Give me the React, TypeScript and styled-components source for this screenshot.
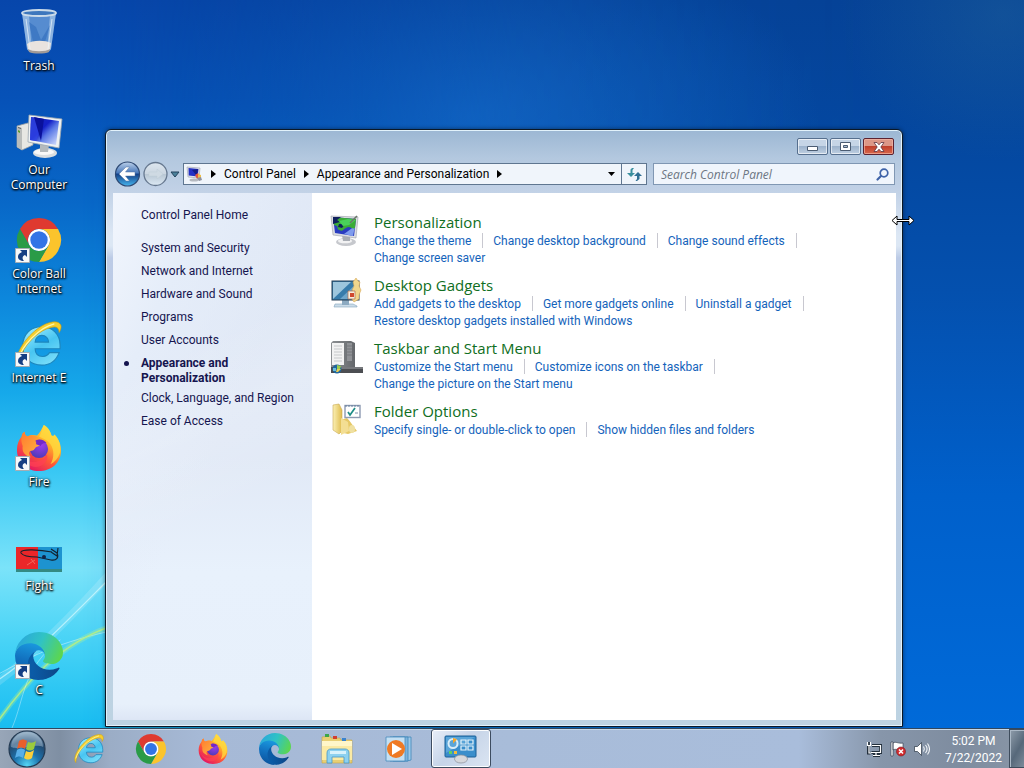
import React from "react";
import styled, { createGlobalStyle, css } from "styled-components";

const uiFont = `Roboto, "Open Sans", sans-serif`;
const displayFont = `"Open Sans", "Noto Sans", sans-serif`;

const GlobalStyle = createGlobalStyle`
  * { box-sizing: border-box; }
  html, body { margin: 0; padding: 0; }
  body, button, input { font-family: ${uiFont}; font-size: 12px; }
  button { margin: 0; padding: 0; border: 0; background: none; color: inherit; cursor: default; }
  a { text-decoration: none; }
  svg { display: block; flex: none; overflow: visible; }
`;

/* ---------- Desktop ---------- */

const Screen = styled.div`
  display: flex;
  flex-direction: column;
  min-height: 100vh;
  overflow: hidden;
`;

const Desktop = styled.main`
  position: relative;
  flex: 1;
  background: linear-gradient(
    to bottom,
    #0746ab 0%,
    #0652b8 14%,
    #0868c8 28%,
    #0d87dc 41%,
    #16a9ea 54%,
    #3ac8f4 65%,
    #7be3f9 78%,
    #48d3f6 88%,
    #18bdf1 100%
  );

  &::before {
    content: "";
    position: absolute;
    inset: 0;
    background:
      radial-gradient(ellipse 16% 20% at 98% 2%, #2a6d9c55, transparent),
      radial-gradient(ellipse 34% 26% at 46% 16%, #1a74d2aa, transparent),
      linear-gradient(to bottom, #054296 0%, #04479f 18%, #0450ae 40%, #0060cb 68%, #006ad9 100%);
    mask-image: linear-gradient(to right, transparent 8%, #000c 50%, #000 85%);
  }
`;

const Beams = styled.svg`
  position: absolute;
  left: 0;
  bottom: 0;
`;

const IconColumn = styled.nav`
  position: relative;
  display: flex;
  flex-direction: column;
  width: 78px;
`;

const Shortcut = styled.button`
  display: flex;
  flex-direction: column;
  align-items: center;
  gap: 2px;
  height: 104px;
  padding-top: 8px;
  color: #fff;
  font-family: ${displayFont};
  line-height: 15px;
  text-shadow: 0 1px 2px #000, 1px 1px 2px #000, 0 0 3px #000a;
`;

const ShortcutPicture = styled.span`
  display: flex;
  align-items: center;
  justify-content: center;
  position: relative;
  width: 48px;
  height: 48px;
`;

const ShortcutArrow = styled.svg`
  position: absolute;
  left: 0;
  bottom: 1px;
`;

/* ---------- Window ---------- */

const Window = styled.section`
  position: absolute;
  inset: 129px 121px 1px 105px;
  display: flex;
  flex-direction: column;
  padding: 0 6px 6px 7px;
  border: 1px solid #0b1826;
  border-radius: 6px 6px 0 0;
  background: linear-gradient(
    to bottom,
    #9cb7d3 0,
    #b3c8df 28px,
    #c1d1e6 60px,
    #dce7f4 105px,
    #dce7f4 116px,
    #bccbe6 128px,
    #bdcfe4 70%,
    #bdd3e2 100%
  );
  box-shadow: inset 0 0 0 1px #e2f2fb, 0 0 4px #0007;
`;

const TitleBar = styled.header`
  display: flex;
  justify-content: flex-end;
  gap: 2px;
  height: 31px;
  padding: 8px 2px 0 0;
`;

const CaptionButton = styled.button<{ $close?: boolean }>`
  display: flex;
  align-items: center;
  justify-content: center;
  width: 31px;
  height: 17px;
  border: 1px solid #566f8e;
  border-radius: 2px;
  box-shadow: inset 0 0 0 1px #ffffff99;
  background: linear-gradient(#c6d5e6 0 48%, #9db3cc 50%, #bfd0e2);
  ${(p) =>
    p.$close &&
    css`
      border-color: #5c2230;
      box-shadow: inset 0 0 0 1px #f3b8a8aa;
      background: linear-gradient(#dc9787 0 46%, #c0402c 50%, #d8674c);
    `}
`;

const NavBar = styled.div`
  display: flex;
  align-items: center;
  gap: 6px;
  height: 26px;
  padding: 0 1px;
`;

const History = styled.div`
  display: flex;
  align-items: center;
  width: 69px;
  margin-right: -6px;
  gap: 2px;
`;

const HistoryButton = styled.button`
  display: flex;
`;

const AddressBar = styled.div`
  display: flex;
  flex: 1;
  height: 22px;
  border: 1px solid #5f7690;
  background: #f0f5fb;
  min-width: 0;
`;

const Crumbs = styled.div`
  display: flex;
  align-items: center;
  flex: 1;
  gap: 8px;
  padding: 0 6px 0 2px;
  min-width: 0;
  white-space: nowrap;
`;

const Crumb = styled.button`
  color: #000;
  line-height: 18px;
`;

const HistoryDrop = styled.button`
  margin-left: auto;
`;

const Refresh = styled.button`
  display: flex;
  align-items: center;
  justify-content: center;
  width: 25px;
  border-left: 1px solid #5f7690;
`;

const SearchBox = styled.label`
  display: flex;
  align-items: center;
  width: 242px;
  height: 22px;
  padding: 0 5px 0 7px;
  border: 1px solid #8097b3;
  background: #f0f5fc;
`;

const SearchInput = styled.input`
  flex: 1;
  min-width: 0;
  padding: 0;
  border: 0;
  outline: 0;
  background: none;
  font-family: ${displayFont};
  font-style: italic;
  &::placeholder {
    color: #6d7683;
    opacity: 1;
  }
`;

const Body = styled.div`
  display: flex;
  flex: 1;
  margin-top: 6px;
  background: #fff;
`;

const Sidebar = styled.nav`
  width: 199px;
  flex: none;
  padding: 15px 0 0 28px;
  background:
    linear-gradient(155deg, transparent 30%, #ffffff22 44%, transparent 60%),
    linear-gradient(115deg, #f2f6fd 0%, #e5edf9 22%, #dfe7f500 50%),
    linear-gradient(to bottom, #e0e8f6 0%, #e1e9f6 50%, #e8f1fc 72%, #e7f0fb 97%, #dde6f5 100%);
`;

const SideList = styled.ul`
  list-style: none;
  margin: 0;
  padding: 0;
`;

const SideItem = styled.li<{ $active?: boolean }>`
  position: relative;
  margin-bottom: ${(p) => (p.$active ? 5 : 8)}px;
  line-height: 15px;
  ${(p) =>
    p.$active &&
    css`
      width: 100px;
      font-weight: 700;
      &::before {
        content: "";
        position: absolute;
        left: -17px;
        top: 5px;
        width: 5px;
        height: 5px;
        border-radius: 50%;
        background: #14144e;
      }
    `}
`;

const SideLink = styled.a`
  color: #15154f;
`;

const HomeLink = styled(SideLink)`
  display: block;
  margin-bottom: 18px;
  line-height: 15px;
`;

const Content = styled.div`
  display: flex;
  flex-direction: column;
  gap: 8px;
  flex: 1;
  min-width: 0;
  padding: 19px 18px 0 18px;
`;

const Category = styled.section`
  display: flex;
  align-items: flex-start;
  gap: 12px;
`;

const CategoryIcon = styled.span`
  width: 32px;
  padding-top: 3px;
`;

const CategoryText = styled.div`
  flex: 1;
  min-width: 0;
`;

const CategoryTitle = styled.h2`
  margin: 0;
  font-family: ${displayFont};
  font-size: 15px;
  font-weight: 400;
  line-height: 21px;
`;

const TitleLink = styled.a`
  color: #0f6e22;
`;

const Tasks = styled.ul`
  display: flex;
  flex-wrap: wrap;
  margin: 0;
  padding: 0;
  list-style: none;
`;

const Task = styled.li`
  margin-right: 10px;
  padding-right: 12px;
  line-height: 17px;
  &:not(:last-child) {
    background: linear-gradient(#c8c8d0, #c8c8d0) right top / 1px 15px no-repeat;
  }
`;

const TaskLink = styled.a`
  color: #1463bb;
`;

const ResizeCursor = styled.svg`
  position: absolute;
  right: -13px;
  top: 85px;
`;

/* ---------- Taskbar ---------- */

const Taskbar = styled.footer`
  position: relative;
  display: flex;
  height: 40px;
  border-top: 1px solid #31475f;
  box-shadow: inset 0 1px 0 #c6d8e8;
  background: linear-gradient(
    to right,
    #98a6b8 0,
    #7f8fa3 60px,
    #9badc6 110px,
    #a6b9d6 200px,
    #a8bcd9 50%,
    #a9bddb 78%,
    #8796aa 86%,
    #7e8c9f 94%,
    #8996a7 100%
  );
`;

const StartButton = styled.button`
  display: flex;
  align-items: center;
  justify-content: center;
  width: 54px;
  margin-right: 5px;
`;

const Pinned = styled.div`
  display: flex;
  gap: 2px;
  flex: 1;
`;

const TaskButton = styled.button<{ $active?: boolean }>`
  display: flex;
  align-items: center;
  justify-content: center;
  width: 60px;
  ${(p) =>
    p.$active &&
    css`
      border: 1px solid #3d4c60;
      border-radius: 3px;
      box-shadow: inset 0 0 0 1px #fffffff0;
      background: linear-gradient(135deg, #e8eef8, #c6d4e8 45%, #dbe5f2);
    `}
`;

const Tray = styled.div`
  display: flex;
  align-items: center;
  gap: 8px;
`;

const Clock = styled.time`
  width: 71px;
  padding-top: 2px;
  color: #fff;
  line-height: 17px;
  text-align: center;
`;

const ShowDesktop = styled.button`
  align-self: stretch;
  width: 15px;
  margin-left: -8px;
  border: 1px solid #3e4c5c;
  border-right: 0;
  box-shadow: inset 1px 1px 0 #aab8c6;
  background: linear-gradient(120deg, #8f9dab, #56687a 55%, #7c8b9a);
`;

/* ---------- Drawings ---------- */

const SharedPaints = () => (
  <svg width="0" height="0" aria-hidden="true" style={{ position: "absolute" }}>
    <defs>
      <linearGradient id="edgeDark" x1="0.2" y1="0.6" x2="1" y2="0.6">
        <stop offset="0" stopColor="#0b5ba6" />
        <stop offset="1" stopColor="#0d4687" />
      </linearGradient>
      <linearGradient id="edgeMid" x1="0.6" y1="0" x2="0.4" y2="1">
        <stop offset="0" stopColor="#1b9de2" />
        <stop offset="0.5" stopColor="#1272c0" />
        <stop offset="1" stopColor="#0a529c" />
      </linearGradient>
      <linearGradient id="edgeTop" x1="0" y1="0.3" x2="1" y2="0.6">
        <stop offset="0" stopColor="#2aa6dd" />
        <stop offset="0.5" stopColor="#30c3c4" />
        <stop offset="1" stopColor="#5cd64f" />
      </linearGradient>
      <linearGradient id="foxBody" x1="0.85" y1="0.05" x2="0.25" y2="0.95">
        <stop offset="0" stopColor="#fff04a" />
        <stop offset="0.35" stopColor="#ffb02a" />
        <stop offset="0.62" stopColor="#ff5b36" />
        <stop offset="1" stopColor="#e31763" />
      </linearGradient>
      <radialGradient id="foxGlobe" cx="0.6" cy="0.25" r="0.8">
        <stop offset="0" stopColor="#a13cf0" />
        <stop offset="1" stopColor="#4a3bb5" />
      </radialGradient>
      <linearGradient id="foxHead" x1="0" y1="0" x2="1" y2="1">
        <stop offset="0" stopColor="#ff7a2f" />
        <stop offset="1" stopColor="#ffb840" />
      </linearGradient>
      <linearGradient id="ieBlue" x1="0.2" y1="0" x2="0.8" y2="1">
        <stop offset="0" stopColor="#9becff" />
        <stop offset="0.5" stopColor="#48c5f1" />
        <stop offset="1" stopColor="#7fe0fa" />
      </linearGradient>
      <linearGradient id="screenBlue" x1="0" y1="0" x2="1" y2="1">
        <stop offset="0" stopColor="#1426b0" />
        <stop offset="0.42" stopColor="#1420c8" />
        <stop offset="0.6" stopColor="#5a78e6" />
        <stop offset="1" stopColor="#dfe8ff" />
      </linearGradient>
      <linearGradient id="folderYellow" x1="0" y1="0" x2="1" y2="0">
        <stop offset="0" stopColor="#fbf0b4" />
        <stop offset="1" stopColor="#dfbc4e" />
      </linearGradient>
      <linearGradient id="menuGrey" x1="0" y1="0" x2="1" y2="0">
        <stop offset="0" stopColor="#8d9093" />
        <stop offset="1" stopColor="#64676b" />
      </linearGradient>
    </defs>
  </svg>
);

type IconProps = { size: number };

const Chrome = ({ size }: IconProps) => (
  <svg width={size} height={size} viewBox="0 0 48 48" aria-hidden="true">
    <circle cx="24" cy="24" r="12" fill="#fff" />
    <path fill="#df3a30" d="M24,12H44.7812a23.9939,23.9939,0,0,0-41.5639.0029L13.6079,30l.0093-.0024A11.9852,11.9852,0,0,1,24,12Z" />
    <path fill="#fbc42c" d="M34.3913,30.0029,24.0007,48A23.994,23.994,0,0,0,44.78,12.0031H23.9989l-.0025.0093A11.985,11.985,0,0,1,34.3913,30.0029Z" />
    <path fill="#2a9b47" d="M13.6086,30.0031,3.218,12.006A23.994,23.994,0,0,0,24.0025,48L34.3931,30.0029l-.0067-.0068a11.9852,11.9852,0,0,1-20.7778.007Z" />
    <circle cx="24" cy="24" r="9.5" fill="#3374e6" />
  </svg>
);

const Edge = ({ size }: IconProps) => (
  <svg width={size} height={size} viewBox="0 0 256 256" aria-hidden="true">
    <path fill="url(#edgeDark)" d="M231.05 190.54c-3.38 1.76-6.86 3.33-10.43 4.7a101.15 101.15 0 0 1-35.6 6.46c-46.92 0-87.79-32.27-87.79-73.69.1-11.32 6.33-21.7 16.25-27.16-42.45 1.79-53.36 46.02-53.36 71.94 0 73.27 67.53 80.7 82.08 80.7 7.84 0 19.68-2.28 26.78-4.53l1.3-.43a128.35 128.35 0 0 0 66.6-52.8 4 4 0 0 0-5.83-5.19z" />
    <path fill="url(#edgeMid)" d="M105.73 241.42a79.2 79.2 0 0 1-22.74-21.34 80.72 80.72 0 0 1 29.49-119.23c3.12-1.47 8.45-4.13 15.54-4A32.35 32.35 0 0 1 153.7 109.83a31.88 31.88 0 0 1 6.35 18.65c0-.22 24.47-79.6-80-79.6-43.9 0-80.01 41.66-80.01 78.21a130.15 130.15 0 0 0 12.08 56.03 128.08 128.08 0 0 0 156.3 67 75.5 75.5 0 0 1-62.68-8.7z" />
    <path fill="url(#edgeTop)" d="M152.28 148.86c-.8 1.05-3.3 2.5-3.3 5.66 0 2.61 1.7 5.12 4.72 7.23 14.39 10 41.5 8.69 41.57 8.69 10.65 0 21.1-2.9 30.28-8.32a61.34 61.34 0 0 0 30.4-52.88c.26-22.41-8-37.3-11.34-43.9C223.47 23.9 177.78 0 128.02 0A128 128 0 0 0 0 126.2c.49-36.54 36.8-66.05 80.02-66.05 3.5 0 23.46.34 42.01 10.07 16.34 8.58 24.9 18.94 30.85 29.21 6.18 10.67 7.28 24.15 7.28 29.52 0 5.37-2.74 13.33-7.88 19.9z" />
  </svg>
);

const Firefox = ({ size }: IconProps) => (
  <svg width={size} height={size} viewBox="0 0 48 48" aria-hidden="true">
    <path fill="url(#foxBody)" d="M29 0c5 3 7 7 8 11 2 1 3 0 3-1 5 5 7 11 7 17 0 12-10 21-23 21S1 39 1 26c0-6 2-11 5-14 0-2 1-4 3-5 0 3 1 4 3 5 3-2 7-2 10-1 3-3 5-7 7-11z" />
    <path fill="#ffd83f" fillOpacity=".8" d="M29 0c5 3 7 7 8 11 2 1 3 0 3-1 5 5 7 11 6 19-2 6-6 10-10 12 4-7 4-15 0-21-3-4-8-6-12-8 2-3 4-7 5-12z" />
    <circle cx="24" cy="25" r="9.5" fill="url(#foxGlobe)" />
    <path fill="url(#foxHead)" d="M6 12c0-2 1-4 3-5 0 3 1 4 3 5 4-2 8-1 11 1-2 1-3 3-3 4 2 1 5 0 7 1 0 3-3 4-6 5-2 2-2 4-6 4-2 1-2 4 1 7-7-2-10-6-9-12-1-3-2-6-1-10z" />
    <path fill="#ff4054" fillOpacity=".7" d="M4 30c4 7 11 10 18 8 6-1 9-5 10-8 2 5-1 11-7 13-8 3-17-3-21-13z" />
    <path fill="#7328c9" d="M21 16c4-2 9 0 11 3-3-1-6 1-6 3l-5-2z" />
  </svg>
);

const Explorer = ({ size }: IconProps) => (
  <svg width={size} height={size} viewBox="0 0 48 48" aria-hidden="true">
    <path fill="url(#ieBlue)" stroke="#1d86bd" strokeWidth="1.2" fillRule="evenodd" d="M27 6c11 0 19 8 19 19v4H20c0 5 3 8 8 8 3 0 5-1 7-4h10c-3 8-9 13-18 13C15 46 7 38 7 26S15 6 27 6zm-7 16h14c0-4-3-7-7-7s-7 3-7 7z" />
    <path fill="#f6cf2d" stroke="#c89a12" strokeWidth=".7" d="M3 46C-3 39 6 22 19 11 29 2 42-2 46 3c2 2 1 6-1 9 0-5-3-7-9-5C26 9 12 21 6 34c-2 5-3 9-3 12z" />
    <path fill="none" stroke="#fff6a8" strokeWidth="1.2" d="M3 39C6 27 23 7 40 3" />
  </svg>
);

const Trash = () => (
  <svg width="40" height="48" viewBox="0 0 40 48" aria-hidden="true">
    <path fill="#78a9de" fillOpacity=".7" d="M3 5l5 36c1 4 23 4 24 0l5-36z" />
    <path fill="#bcd6ef" fillOpacity=".55" d="M3 5l5 36c1 2 3 3 5 3L10 7zM37 5l-5 36c-1 2-2 2-4 3l3-37z" />
    <path fill="#2766b8" fillOpacity=".5" d="M10 14l7 5 5 13 9-15-5 17H14z" />
    <path fill="#e9e3df" d="M8 36c5-4 18-4 24-1l-1 6c-3 4-19 4-22 0z" />
    <path fill="#a19a97" d="M9 41c4 3 18 3 22 0l-1 3c-4 2-16 2-20 0z" />
    <ellipse cx="20" cy="5" rx="17" ry="3" fill="#3d77bd" stroke="#cbdbe9" strokeWidth="1.8" />
    <path fill="none" stroke="#eef6fc" strokeOpacity=".7" d="M7 11l4 30M33 11l-4 30" />
  </svg>
);

const Computer = () => (
  <svg width="48" height="48" viewBox="0 0 48 48" aria-hidden="true">
    <path fill="#e7e7e3" stroke="#9aa0a3" strokeWidth=".8" d="M2 14l11-3 5 3v19L7 38l-5-3z" />
    <path fill="#b9bcbb" d="M2 14l5 2v22l-5-3z" />
    <path fill="#5b9b2f" d="M3 18l2 1v2l-2-1z" />
    <path fill="#5d6062" d="M3 15l3 1v1l-3-1z" />
    <ellipse cx="30" cy="41" rx="12" ry="5" fill="#d9dde0" />
    <ellipse cx="29" cy="40" rx="10" ry="3" fill="#f8f8f8" />
    <path fill="#b4babd" d="M25 31l9 2-1 7h-8z" />
    <path fill="#eef1f2" stroke="#9ba6ae" strokeWidth=".8" d="M14 3l33 4-3 29-31-6z" />
    <path fill="url(#screenBlue)" d="M16 5l28 4-3 24-26-5z" />
    <path fill="#3349e8" fillOpacity=".7" d="M16 5l13 2-8 22-6-1z" />
    <path fill="#0a119b" d="M19 5l10 2-3 22z" />
  </svg>
);

const Fight = () => (
  <svg width="46" height="48" viewBox="0 0 46 48" aria-hidden="true">
    <rect y="19" width="22" height="25" fill="#ea2629" />
    <rect x="22" y="19" width="24" height="25" fill="#1d93d0" />
    <path fill="#348a83" d="M0 41h46v3H0z" />
    <path fill="none" stroke="#13222f" strokeWidth="1.1" d="M21 29C14 29 7 28 5 25c-2-5 21-3 31-1M21 29l14 3c6 1 8-3 6-7l-6-4M35 24l6 4 1-8" />
    <circle cx="28" cy="29" r="2" fill="#112447" />
    <path stroke="#f0685c" d="M11 37l8-5M15 31l4 5" />
  </svg>
);

const Arrow = () => (
  <ShortcutArrow width="15" height="15" viewBox="0 0 15 15" aria-hidden="true">
    <path fill="#f7f9fa" stroke="#a4adb4" d="M.5.5h14v14H.5z" />
    <path fill="#163f83" d="M5 2h7v7L10 7c-3 1-3 4-1 6-4 0-6-2-6-4 0-3 2-4 4-5z" />
  </ShortcutArrow>
);

const WallpaperBeams = () => (
  <Beams width="160" height="260" viewBox="0 0 160 260" aria-hidden="true">
    <g fill="none" strokeLinecap="round">
      <path stroke="#fff" strokeOpacity=".16" strokeWidth="8" d="M-5 216C30 190 75 145 115 100" />
      <path stroke="#e8ffff" strokeOpacity=".6" strokeWidth="1.3" d="M-5 214C30 192 70 150 112 108" />
      <path stroke="#fff" strokeOpacity=".4" d="M-5 208C35 186 60 174 115 162" />
      <path stroke="#bdf488" strokeOpacity=".3" strokeWidth="5" d="M-4 256C25 215 60 175 112 158" />
      <path stroke="#b9f07f" strokeOpacity=".85" strokeWidth="1.6" d="M-4 256C25 215 60 175 112 158" />
      <path stroke="#fff" strokeOpacity=".35" d="M12 260C25 230 22 200 60 172" />
    </g>
  </Beams>
);

const StartOrb = () => (
  <svg width="38" height="38" viewBox="0 0 38 38" aria-hidden="true">
    <defs>
      <radialGradient id="orb" cx="0.5" cy="0.95" r="0.9">
        <stop offset="0" stopColor="#55d6f5" />
        <stop offset="0.4" stopColor="#1c73ae" />
        <stop offset="0.75" stopColor="#234a70" />
        <stop offset="1" stopColor="#7f9bb4" />
      </radialGradient>
    </defs>
    <circle cx="19" cy="19" r="18" fill="url(#orb)" stroke="#243a52" strokeWidth="1.2" />
    <path fill="#c8dcea" fillOpacity=".4" d="M3 17a16 15 0 0 1 32 0c-9-4-22 4-32 0z" />
    <path fill="#e9602b" d="M11 11c3-2 5-2 8 0l-2 8c-3-2-5-2-8 0z" />
    <path fill="#9bcb3c" d="M20 12c3 1 5 1 8-1l-2 8c-3 2-5 2-8 0z" />
    <path fill="#58aee8" d="M9 20c3-2 5-2 8 0l-2 8c-3-2-5-2-8 0z" />
    <path fill="#fbcf3b" d="M18 21c3 2 5 1 8-1l-2 8c-3 2-5 2-8 0z" />
  </svg>
);

const Folders = () => (
  <svg width="34" height="32" viewBox="0 0 34 32" aria-hidden="true">
    <path fill="#e8cf74" stroke="#c2a548" strokeWidth=".6" d="M2 4l8-1 1 2h9l1 2h11v23H2z" />
    <rect x="5" y="1" width="4" height="3" fill="#3da648" />
    <rect x="13" y="3" width="4" height="3" fill="#d23f30" />
    <rect x="22" y="5" width="4" height="3" fill="#3a83cf" />
    <path fill="#fbeaa4" d="M2 8h30v19H2z" />
    <path fill="#fff6c9" d="M2 8h30v5H2z" />
    <path fill="#8cd1f0" stroke="#4697c6" strokeWidth=".8" d="M7 30V20c0-3 2-4 4-4h14c2 0 4 1 4 4v10h-5v-6H12v6z" />
    <path fill="#d8f2fc" d="M10 18h16v3H10z" />
  </svg>
);

const MediaPlayer = () => (
  <svg width="28" height="26" viewBox="0 0 28 26" aria-hidden="true">
    <path fill="#9fc9e8" stroke="#3f88ba" strokeWidth=".8" d="M8 1h18v23l-4 1H8z" />
    <path fill="#7db4dc" stroke="#3f88ba" strokeWidth=".8" d="M5 1h18v24H5z" />
    <path fill="#c4e0f3" stroke="#468cbd" strokeWidth=".8" d="M1 1h19v24H1z" />
    <circle cx="11" cy="13" r="9" fill="#ef7a24" />
    <path fill="#fff" d="M7 7l10 6-10 6z" />
  </svg>
);

const ControlPanel = () => (
  <svg width="34" height="30" viewBox="0 0 34 30" aria-hidden="true">
    <rect x="1" y="2" width="31" height="21" rx="1" fill="#3a8ecb" stroke="#1d6097" />
    <path fill="#79bce6" fillOpacity=".5" d="M2 3h29L2 19z" />
    <circle cx="9" cy="9.5" r="4.5" fill="none" stroke="#d8edf8" strokeWidth="2" />
    <path fill="#f3a72b" d="M9 4v5.500l4-4A6 6 0 0 0 9 4z" />
    <path fill="#5fd163" d="M5 17h3v3H5z" />
    <path fill="#f1bd3b" d="M10 17h3v3h-3z" />
    <path fill="none" stroke="#e5f3fb" strokeWidth="1.200" d="M17 6h5v4h-5zM24 6h5v4h-5zM17 12h5v4h-5zM24 12h5v4h-5z" />
    <ellipse cx="17" cy="25" rx="6.5" ry="4" fill="#d6d8dc" stroke="#898e98" strokeWidth=".7" />
  </svg>
);

const Network = () => (
  <svg width="16" height="16" viewBox="0 0 16 16" fill="none" aria-hidden="true">
    <path stroke="#222f3c" strokeWidth="3" d="M6 4.500h8.500v7H5.500M10 12v2M7 14.500h7M2.500 1v5M2.500 6v6h2M1 3.500h3" />
    <path stroke="#fff" strokeWidth="1.200" d="M6 4.500h8.500v7H5M10 12v2M7 14.500h7M1.500 1v3.500h3V1M3 4.500V12h2" />
  </svg>
);

const ActionCenter = () => (
  <svg width="16" height="16" viewBox="0 0 16 16" aria-hidden="true">
    <path fill="#fff" stroke="#25313f" strokeWidth=".6" d="M1 1h2v14H1zM3 2c3-2 5 1 10 0v7c-4 1-7-2-10 0z" />
    <circle cx="11" cy="10.5" r="4.5" fill="#d32b2d" stroke="#781820" strokeWidth=".6" />
    <path stroke="#fff" strokeWidth="1.500" d="M9 8.500l4 4m0-4l-4 4" />
  </svg>
);

const Volume = () => (
  <svg width="16" height="16" viewBox="0 0 16 16" aria-hidden="true">
    <path fill="#fff" stroke="#263442" strokeWidth=".7" d="M.5 5.500h3l4-4v13l-4-4h-3z" />
    <path fill="none" stroke="#f2f5f8" strokeWidth="1.100" d="M9.500 5.500c1 1.500 1 3.500 0 5M11.500 4c2 2.500 2 5.500 0 8M13.500 2.500c2.600 3.500 2.600 7.500 0 11" />
  </svg>
);

const BackGlyph = () => (
  <svg width="27" height="26" viewBox="0 0 27 26" aria-hidden="true">
    <defs>
      <linearGradient id="back" x1="0" y1="0" x2="0" y2="1">
        <stop offset="0" stopColor="#bacfe9" />
        <stop offset="0.46" stopColor="#4777ba" />
        <stop offset="0.5" stopColor="#143f86" />
        <stop offset="1" stopColor="#45b4ee" />
      </linearGradient>
    </defs>
    <circle cx="13.5" cy="13" r="12" fill="url(#back)" stroke="#2f4a74" strokeWidth="1.2" />
    <path fill="#fff" stroke="#5676a3" strokeWidth=".5" d="M5 13l7-7h3.500L11.500 11H21v4h-9.500l4 5H12z" />
  </svg>
);

const ForwardGlyph = () => (
  <svg width="25" height="26" viewBox="0 0 25 26" aria-hidden="true">
    <defs>
      <linearGradient id="forward" x1="0" y1="0" x2="0" y2="1">
        <stop offset="0" stopColor="#dde6ef" />
        <stop offset="0.48" stopColor="#cbd6e1" />
        <stop offset="0.52" stopColor="#b9c7d4" />
        <stop offset="1" stopColor="#dce9f4" />
      </linearGradient>
    </defs>
    <circle cx="12.5" cy="13" r="11.5" fill="url(#forward)" stroke="#66788f" strokeWidth="1.3" />
    <path fill="#cfdae3" stroke="#bfccd7" strokeWidth=".5" d="M20 13l-6-5v3H6v4h8v3z" />
  </svg>
);

const Chevron = () => (
  <svg width="5" height="8" viewBox="0 0 5 8" aria-hidden="true">
    <path d="M0 0l5 4-5 4z" />
  </svg>
);

const AddressIcon = () => (
  <svg width="17" height="16" viewBox="0 0 17 16" aria-hidden="true">
    <path fill="#e4e6ea" stroke="#9a9fac" strokeWidth=".6" d="M1 1l13 1-1 10-11-1z" />
    <path fill="#2330c4" d="M2.500 2l10 1-.8 7.500-9-1z" />
    <path fill="#141c86" d="M6 4l6-1-1 7z" />
    <ellipse cx="8" cy="14" rx="4.5" ry="1.5" fill="#b5b9bf" />
    <path fill="#e05940" d="M9 9l3-2 2 3-3 3z" />
    <path fill="#efbf45" d="M12 8l3 1v4l-3-1z" />
    <path fill="#8d92a0" d="M11 12l4-1 1 3-3 1z" />
  </svg>
);

const PersonalizationIcon = () => (
  <svg width="32" height="32" viewBox="0 0 32 32" aria-hidden="true">
    <ellipse cx="16" cy="27" rx="10" ry="4" fill="#c6c8cd" />
    <ellipse cx="15" cy="26" rx="7" ry="2.3" fill="#f2f2f3" />
    <path fill="#a9adb4" d="M12 20h8v6h-7z" />
    <path fill="#dcdee2" stroke="#9da0a9" strokeWidth=".6" d="M1 1l27 1-2 21-23-3z" />
    <path fill="#2a3cc0" d="M3 2l23 2-2 17-19-3z" />
    <path fill="#7f9cee" d="M25 11l-11 8 9 2z" />
    <path fill="#3cab37" d="M3 2l23 2-1 9c-3 2-5-3-9 0-3 1-2 4-7 2-3-1 1-4-5-5z" />
    <path fill="#10205d" d="M3 2h8l-4 3 3 2-7 2zM9 9h6l-3 4-4-1z" />
    <path fill="#49d05a" d="M9 6l9-2 8 1-7 5-6 1z" />
    <path stroke="#6a7669" strokeWidth="1.600" d="M20 8l7-7" />
  </svg>
);

const GadgetsIcon = () => (
  <svg width="32" height="32" viewBox="0 0 32 32" aria-hidden="true">
    <path fill="#cbdce9" stroke="#85a4bd" strokeWidth=".6" d="M5 26h18l4 2v1H4z" />
    <path fill="#8caac1" d="M12 22h7v5h-7z" />
    <rect x="2" y="3" width="27" height="19" fill="#377cab" stroke="#243d53" />
    <path fill="#9dc6dd" d="M3 4h18L3 21z" />
    <path fill="#6ea6cb" d="M28 4v17H10z" />
    <path fill="#f0d68d" stroke="#d39d45" strokeWidth=".5" d="M23 4l3-4 2 3 2 1-1 4 2 4-2 5v4l-5 3-3-4 3-5-2-3 2-4z" />
    <path fill="#f7f0df" stroke="#ae6a4e" strokeWidth=".7" d="M18 13h7v8h-7z" />
    <path fill="#d1492e" d="M20 15h4v4h-4z" />
  </svg>
);

const TaskbarIcon = () => (
  <svg width="34" height="32" viewBox="0 0 34 32" aria-hidden="true">
    <path fill="url(#menuGrey)" d="M3 0h18l4 2v24H1V2z" />
    <path fill="#f2f2f2" d="M2 2h12v22H2z" />
    <path stroke="#c6c8ca" d="M4 5h8M4 8h8M4 11h8M4 14h8M4 17h8M4 20h8" />
    <path fill="#909296" d="M17 2h5v18h-5z" />
    <path stroke="#74767a" d="M17 5h5M17 8h5M17 11h5M17 14h5" />
    <path fill="#4c4e52" d="M1 26h32v6H1z" />
    <path fill="#77797d" d="M11 26h22v2H11z" />
    <circle cx="7" cy="28" r="4.5" fill="#21669c" />
    <path fill="#9ccd4d" d="M7 24l4 1-1 3H7z" />
    <path fill="#e8cd53" d="M7 28h4l-3 3H6z" />
    <path fill="#67bedd" d="M3 27h3v3H3z" />
  </svg>
);

const FolderIcon = () => (
  <svg width="32" height="32" viewBox="0 0 32 32" aria-hidden="true">
    <path fill="#e6c866" d="M10 16l7-2c3 3 6 8 10 13l-9 3-9-2z" />
    <path fill="url(#folderYellow)" stroke="#c9aa50" strokeWidth=".6" d="M3 1l6-1 3 6v21l-3 3-6-4z" />
    <path fill="#f3de93" d="M11 14l7 4 1 9-8 4z" />
    <ellipse cx="22" cy="25" rx="3" ry="4" fill="#efe0a1" />
    <rect x="15" y="1.5" width="15" height="12" fill="#fff" stroke="#8e9bb3" strokeWidth="1.4" />
    <path stroke="#68829e" strokeWidth="1.200" strokeDasharray="2 1" d="M15 2h15" />
    <path fill="none" stroke="#1d8d86" strokeWidth="1.700" d="M18 8l2 3 5-7" />
    <path stroke="#7c91ad" d="M25 9h3" />
  </svg>
);

/* ---------- Data ---------- */

const shortcuts = [
  { label: "Trash", picture: <Trash /> },
  { label: "Our Computer", picture: <Computer /> },
  { label: "Color Ball Internet", picture: <Chrome size={44} />, linked: true },
  { label: "Internet E", picture: <Explorer size={46} />, linked: true },
  { label: "Fire", picture: <Firefox size={46} />, linked: true },
  { label: "Fight", picture: <Fight /> },
  { label: "C", picture: <Edge size={48} />, linked: true },
];

const sections = [
  "System and Security",
  "Network and Internet",
  "Hardware and Sound",
  "Programs",
  "User Accounts",
  "Appearance and Personalization",
  "Clock, Language, and Region",
  "Ease of Access",
];
const currentSection = "Appearance and Personalization";

const categories = [
  {
    title: "Personalization",
    icon: <PersonalizationIcon />,
    tasks: ["Change the theme", "Change desktop background", "Change sound effects", "Change screen saver"],
  },
  {
    title: "Desktop Gadgets",
    icon: <GadgetsIcon />,
    tasks: [
      "Add gadgets to the desktop",
      "Get more gadgets online",
      "Uninstall a gadget",
      "Restore desktop gadgets installed with Windows",
    ],
  },
  {
    title: "Taskbar and Start Menu",
    icon: <TaskbarIcon />,
    tasks: ["Customize the Start menu", "Customize icons on the taskbar", "Change the picture on the Start menu"],
  },
  {
    title: "Folder Options",
    icon: <FolderIcon />,
    tasks: ["Specify single- or double-click to open", "Show hidden files and folders"],
  },
];

const pinned = [
  { label: "Internet Explorer", picture: <Explorer size={30} /> },
  { label: "Chrome", picture: <Chrome size={30} /> },
  { label: "Firefox", picture: <Firefox size={30} /> },
  { label: "Edge", picture: <Edge size={32} /> },
  { label: "File Explorer", picture: <Folders /> },
  { label: "Media Player", picture: <MediaPlayer /> },
  { label: "Control Panel", picture: <ControlPanel />, active: true },
];

/* ---------- Page ---------- */

const ControlPanelWindow = () => (
  <Window aria-label="Control Panel">
    <TitleBar>
      <CaptionButton aria-label="Minimize">
        <svg width="11" height="9" viewBox="0 0 11 9">
          <path fill="#fff" stroke="#4b5c72" d="M.5 4.500h10v4H.5z" />
        </svg>
      </CaptionButton>
      <CaptionButton aria-label="Maximize">
        <svg width="11" height="9" viewBox="0 0 11 9">
          <path fill="#fff" stroke="#4b5c72" d="M.5.5h10v8H.5z" />
          <path fill="#a9bbd0" stroke="#4b5c72" d="M3.500 3.500h4v2h-4z" />
        </svg>
      </CaptionButton>
      <CaptionButton $close aria-label="Close">
        <svg width="12" height="10" viewBox="0 0 12 10">
          <path fill="#fff" stroke="#5d3440" strokeWidth=".8" d="M1 .5h3l2 2.300L8 .5h3L7.800 5 11 9.500H8L6 7.200 4 9.500H1L4.200 5z" />
        </svg>
      </CaptionButton>
    </TitleBar>
    <NavBar>
      <History>
        <HistoryButton aria-label="Back"><BackGlyph /></HistoryButton>
        <HistoryButton aria-label="Forward"><ForwardGlyph /></HistoryButton>
        <HistoryButton aria-label="Recent pages">
          <svg width="10" height="7" viewBox="0 0 10 7">
            <path fill="#4b819b" stroke="#24435c" d="M1 1h8L5 6z" />
          </svg>
        </HistoryButton>
      </History>
      <AddressBar>
        <Crumbs>
          <AddressIcon />
          <Chevron />
          <Crumb>Control Panel</Crumb>
          <Chevron />
          <Crumb>Appearance and Personalization</Crumb>
          <Chevron />
          <HistoryDrop aria-label="Previous locations">
            <svg width="7" height="4" viewBox="0 0 7 4"><path d="M0 0h7L3.500 4z" /></svg>
          </HistoryDrop>
        </Crumbs>
        <Refresh aria-label="Refresh">
          <svg width="15" height="13" viewBox="0 0 15 13">
            <path fill="#3a8f9e" d="M5 0L3.500 1.500V5H0l4 4 4-4H5.500V2L7 0z" />
            <path fill="#2f6f94" d="M11 4l4 4h-2.500v3L10 13H8.500L10 11V8H7z" />
          </svg>
        </Refresh>
      </AddressBar>
      <SearchBox>
        <SearchInput type="text" aria-label="Search Control Panel" placeholder="Search Control Panel" />
        <svg width="13" height="13" viewBox="0 0 13 13" fill="none">
          <circle cx="8" cy="5" r="3.8" stroke="#3f63a8" strokeWidth="1.7" />
          <path stroke="#3f63a8" strokeWidth="2.200" strokeLinecap="round" d="M5 8l-3.500 3.500" />
        </svg>
      </SearchBox>
    </NavBar>
    <Body>
      <Sidebar>
        <HomeLink href="#home">Control Panel Home</HomeLink>
        <SideList>
          {sections.map((name) => (
            <SideItem key={name} $active={name === currentSection}>
              <SideLink href="#section">{name}</SideLink>
            </SideItem>
          ))}
        </SideList>
      </Sidebar>
      <Content>
        {categories.map(({ title, icon, tasks }) => (
          <Category key={title}>
            <CategoryIcon>{icon}</CategoryIcon>
            <CategoryText>
              <CategoryTitle><TitleLink href="#category">{title}</TitleLink></CategoryTitle>
              <Tasks>
                {tasks.map((task) => (
                  <Task key={task}><TaskLink href="#task">{task}</TaskLink></Task>
                ))}
              </Tasks>
            </CategoryText>
          </Category>
        ))}
      </Content>
    </Body>
    <ResizeCursor width="24" height="11" viewBox="0 0 24 11" aria-hidden="true">
      <path fill="#fff" stroke="#000" d="M1 5.500L6 1v3.500h12V1l5 4.500L18 10V6.500H6V10z" />
    </ResizeCursor>
  </Window>
);

export default function App() {
  return (
    <Screen>
      <GlobalStyle />
      <SharedPaints />
      <Desktop>
        <WallpaperBeams />
        <IconColumn aria-label="Desktop">
          {shortcuts.map(({ label, picture, linked }) => (
            <Shortcut key={label}>
              <ShortcutPicture>
                {picture}
                {linked && <Arrow />}
              </ShortcutPicture>
              {label}
            </Shortcut>
          ))}
        </IconColumn>
        <ControlPanelWindow />
      </Desktop>
      <Taskbar>
        <StartButton aria-label="Start"><StartOrb /></StartButton>
        <Pinned>
          {pinned.map(({ label, picture, active }) => (
            <TaskButton key={label} $active={active} aria-label={label}>{picture}</TaskButton>
          ))}
        </Pinned>
        <Tray>
          <Network />
          <ActionCenter />
          <Volume />
          <Clock>5:02 PM<br />7/22/2022</Clock>
          <ShowDesktop aria-label="Show desktop" />
        </Tray>
      </Taskbar>
    </Screen>
  );
}
